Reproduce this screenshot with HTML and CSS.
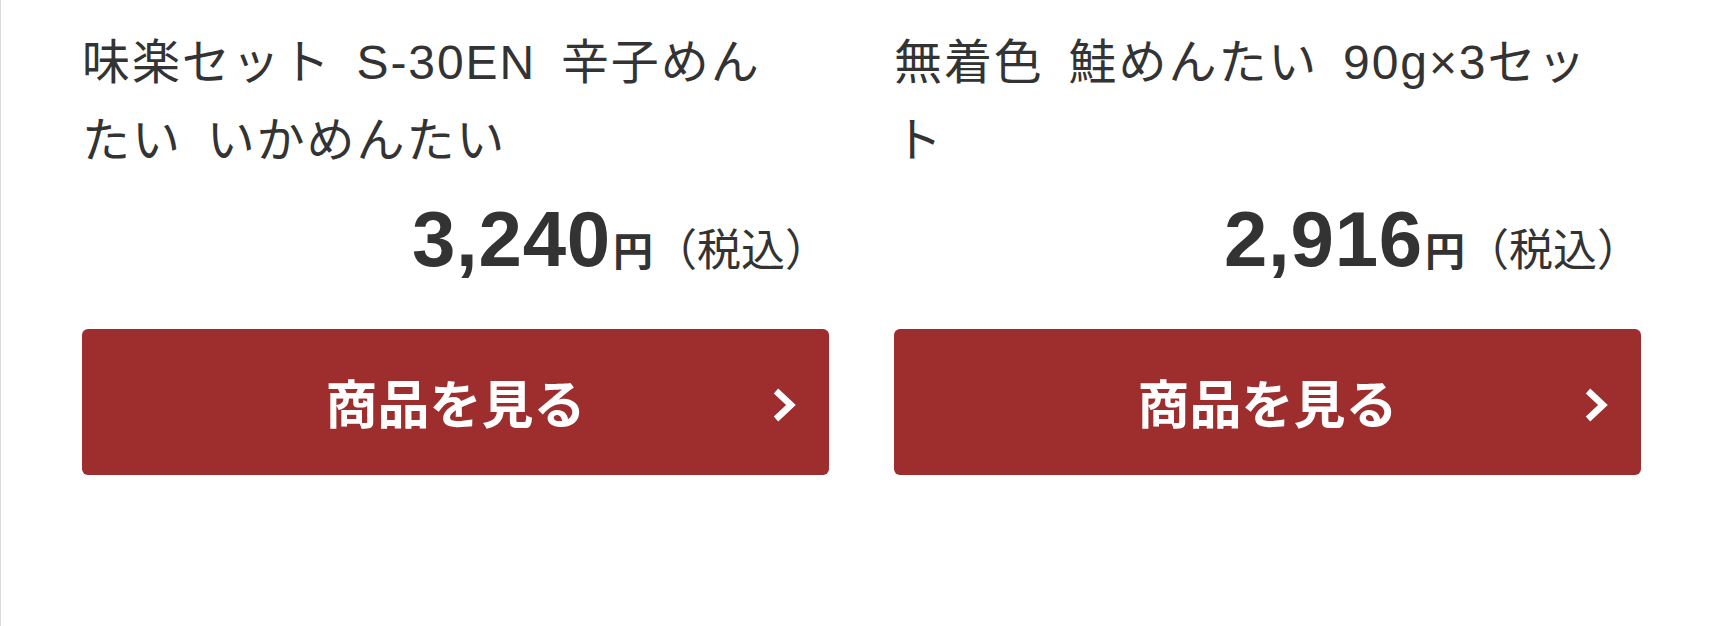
FILE: index.html
```html
<!DOCTYPE html>
<html lang="ja">
<head>
  <meta charset="UTF-8" />
  <meta name="viewport" content="width=device-width, initial-scale=1.0"/>
  <title>明太子 商品一覧</title>
  <link rel="stylesheet" href="styles.css">
</head>
<body>

<div class="page">
  <ul class="item-list">
    <li class="item">
      <p class="item-name">味楽セット S-30EN 辛子めんたい いかめんたい</p>
      <p class="item-price"><span class="num">3,240</span><span class="yen">円</span><span class="tax">（税込）</span></p>
      <a class="item-btn" href="#">
        <span class="label">商品を見る</span>
        <svg class="arrow" width="24" height="34" viewBox="0 0 24 34"><polyline points="3,3 18,17 3,31" /></svg>
      </a>
    </li>
    <li class="item">
      <p class="item-name">無着色 鮭めんたい 90g×3セット</p>
      <p class="item-price"><span class="num">2,916</span><span class="yen">円</span><span class="tax">（税込）</span></p>
      <a class="item-btn" href="#">
        <span class="label">商品を見る</span>
        <svg class="arrow" width="24" height="34" viewBox="0 0 24 34"><polyline points="3,3 18,17 3,31" /></svg>
      </a>
    </li>
  </ul>
</div>

</body>
</html>
```

FILE: styles.css
```css
* {
  box-sizing: border-box;
}

body {
  margin: 0;
  background: #fff;
  color: #333;
  font-family: "Liberation Sans", "Noto Sans CJK JP", sans-serif;
}

.page {
  min-height: 626px;
  border-left: 1px solid #d9d9d9;
}

.item-list {
  list-style: none;
  margin: 0;
  padding: 0 81px;
  display: grid;
  grid-template-columns: 1fr 1fr;
  gap: 65px;
}

.item {
  padding-top: 24px;
}

/* 商品名 */
.item-name {
  margin: 0;
  padding-right: 40px;
  font-size: 48px;
  line-height: 78px;
  letter-spacing: 0.04em;
  word-spacing: 0.2em;
}

/* 価格 */
.item-price {
  margin: 20px 0 0;
  text-align: right;
  font-size: 44px;
  line-height: 1;
}

.item-price .num {
  font-size: 78px;
  font-weight: bold;
  letter-spacing: 0.01em;
}

.item-price .yen {
  font-size: 40px;
  font-weight: bold;
  margin-left: 2px;
}

.item-price .tax {
  font-size: 44px;
}

/* ボタン */
.item-btn {
  margin-top: 51px;
  height: 146px;
  display: grid;
  grid-template-columns: 1fr auto 1fr;
  align-items: center;
  background: #9e2d2e;
  border-radius: 6px;
  color: #fff;
  text-decoration: none;
}

.item-btn .label {
  grid-column: 2;
  font-size: 52px;
  font-weight: bold;
  line-height: 1;
  font-family: "Noto Sans CJK JP", sans-serif;
}

.item-btn .arrow {
  grid-column: 3;
  justify-self: end;
  margin-right: 32px;
  margin-top: 6px;
}

.arrow polyline {
  fill: none;
  stroke: #fff;
  stroke-width: 6.5;
}
```
